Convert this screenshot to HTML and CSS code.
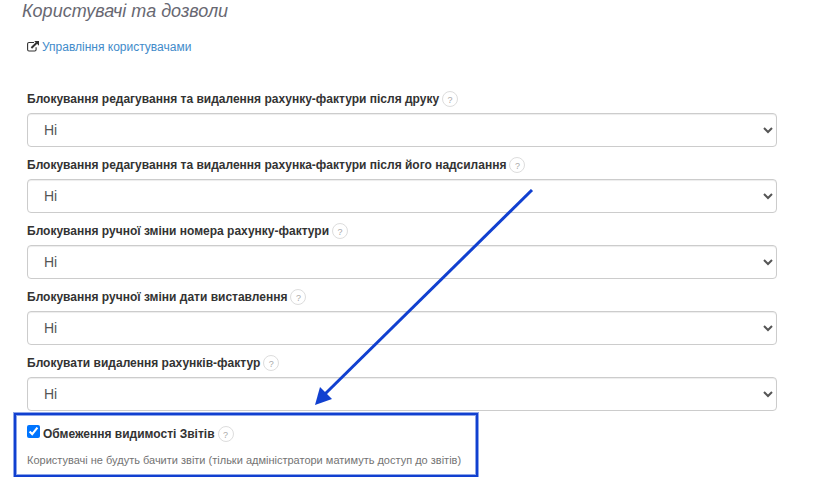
FILE: index.html
```html
<!DOCTYPE html>
<html lang="uk">
<head>
    <meta charset="UTF-8">
    <meta name="viewport" content="width=device-width, initial-scale=1.0">
    <title>Користувачі та дозволи</title>
    <link rel="stylesheet" href="styles.css">
</head>
<body>

    <h2 class="section-title">Користувачі та дозволи</h2>

    <form class="settings">
        <p class="manage">
            <svg class="icon-external" viewBox="0 0 12 11" aria-hidden="true">
                <path d="M7 1.5H2A1.4 1.4 0 0 0 .6 2.9v5.7A1.4 1.4 0 0 0 2 10h5.7a1.4 1.4 0 0 0 1.4-1.4V6.2" fill="none" stroke="#333" stroke-width="1.1"/>
                <path d="M4.4 7L9.8 1.8" stroke="#333" stroke-width="1.9"/>
                <path d="M7.2 0H12v4.8z" fill="#333"/>
            </svg>
            <a href="#">Управління користувачами</a>
        </p>

        <div class="form-group">
            <div class="label-row">
                <label for="lock-print">Блокування редагування та видалення рахунку-фактури після друку</label>
                <span class="help">?</span>
            </div>
            <select id="lock-print" class="form-control">
                <option>Ні</option>
                <option>Так</option>
            </select>
        </div>

        <div class="form-group">
            <div class="label-row">
                <label for="lock-send">Блокування редагування та видалення рахунка-фактури після його надсилання</label>
                <span class="help">?</span>
            </div>
            <select id="lock-send" class="form-control">
                <option>Ні</option>
                <option>Так</option>
            </select>
        </div>

        <div class="form-group">
            <div class="label-row">
                <label for="lock-number">Блокування ручної зміни номера рахунку-фактури</label>
                <span class="help">?</span>
            </div>
            <select id="lock-number" class="form-control">
                <option>Ні</option>
                <option>Так</option>
            </select>
        </div>

        <div class="form-group">
            <div class="label-row">
                <label for="lock-date">Блокування ручної зміни дати виставлення</label>
                <span class="help">?</span>
            </div>
            <select id="lock-date" class="form-control">
                <option>Ні</option>
                <option>Так</option>
            </select>
        </div>

        <div class="form-group">
            <div class="label-row">
                <label for="lock-delete">Блокувати видалення рахунків-фактур</label>
                <span class="help">?</span>
            </div>
            <select id="lock-delete" class="form-control">
                <option>Ні</option>
                <option>Так</option>
            </select>
        </div>

        <div class="highlight">
            <div class="label-row">
                <input type="checkbox" id="limit-reports" checked>
                <label for="limit-reports">Обмеження видимості Звітів</label>
                <span class="help">?</span>
            </div>
            <p class="hint">Користувачі не будуть бачити звіти (тільки адміністратори матимуть доступ до звітів)</p>

            <!-- Стрілка, що вказує на блок -->
            <svg class="arrow" viewBox="0 0 220 218" aria-hidden="true">
                <path d="M218 1L11 205" stroke="#1140d0" stroke-width="3"/>
                <path d="M1 216L6 198L18 210z" fill="#1140d0"/>
            </svg>
        </div>
    </form>

</body>
</html>
```

FILE: styles.css
```css
body {
    margin: 0;
    background-color: #fff;
    font-family: "Liberation Sans", Arial, sans-serif;
    font-size: 12px;
    line-height: 16px;
    color: #333;
}

.section-title {
    margin: 0 22px;
    font-size: 18px;
    font-style: italic;
    font-weight: 400;
    line-height: 22px;
    color: #686872;
}

.settings {
    padding: 17px 46px 0 27px;
}

/* --- Посилання --- */
.manage {
    display: flex;
    align-items: center;
    gap: 3px;
    margin: 0 0 36px;
}

.manage a {
    color: #428bca;
    text-decoration: none;
}

.manage a:hover {
    text-decoration: underline;
}

.icon-external {
    width: 12px;
    height: 11px;
    margin-bottom: 2px;
}

/* --- Поля форми --- */
.form-group {
    margin-bottom: 10px;
}

.label-row {
    display: flex;
    align-items: center;
    gap: 3px;
    font-weight: 700;
}

.help {
    box-sizing: border-box;
    width: 16px;
    height: 16px;
    border: 1px solid #ddd;
    border-radius: 50%;
    font-size: 9px;
    font-weight: 400;
    line-height: 16px;
    text-align: center;
    color: #aaa;
    cursor: help;
}

.form-control {
    display: block;
    box-sizing: border-box;
    width: 100%;
    height: 34px;
    margin-top: 6px;
    padding: 6px 12px;
    border: 1px solid #ccc;
    border-radius: 4px;
    background-color: #fff;
    box-shadow: inset 0 1px 1px rgba(0, 0, 0, 0.075);
    font-family: inherit;
    font-size: 14px;
    color: #555;
}

/* --- Виділений блок --- */
.highlight {
    position: relative;
    box-sizing: border-box;
    width: fit-content;
    margin: -8px 0 0 -13px;
    padding: 10px 15px 7px 11px;
    border: 2px solid #1140d0;
    box-shadow: 0 0 0 1px #8ca5ea, inset 0 0 0 1px #8ca5ea;
}

.highlight input {
    width: 13px;
    height: 13px;
    margin: 0 0 4px;
}

.hint {
    margin: 10px 0 0;
    font-size: 11px;
    color: #737373;
}

.arrow {
    position: absolute;
    right: -58px;
    bottom: 68px;
    width: 220px;
    height: 218px;
    pointer-events: none;
}
```
